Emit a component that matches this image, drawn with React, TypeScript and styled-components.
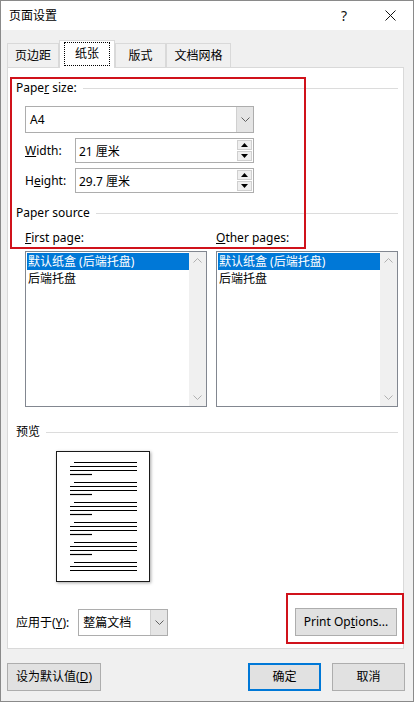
import React from "react";
import styled, { createGlobalStyle, css } from "styled-components";

const GlobalStyle = createGlobalStyle`
  html, body {
    margin: 0;
    padding: 0;
    background: #ffffff;
  }
  body {
    font-family: "Noto Sans", "Noto Sans CJK SC", sans-serif;
    font-size: 12px;
    color: #000;
  }
  * { box-sizing: border-box; }
`;

const RED = "#d0121b";

const Window = styled.div`
  width: 414px;
  height: 702px;
  border: 1px solid #8a8a8a;
  background: #f0f0f0;
  display: flex;
  flex-direction: column;
`;

const TitleBar = styled.div`
  height: 29px;
  background: #ffffff;
  display: flex;
  align-items: center;
  padding-left: 8px;
`;

const Title = styled.div`
  flex: 1;
  font-size: 12px;
  line-height: 16px;
`;

const TitleButton = styled.div`
  width: 46px;
  height: 29px;
  display: flex;
  align-items: center;
  justify-content: center;
  font-size: 14px;
  color: #111;
`;

const Body = styled.div`
  padding: 10px 9px 0 6px;
  display: flex;
  flex-direction: column;
`;

const TabRow = styled.div`
  display: flex;
  align-items: flex-end;
  height: 27px;
  position: relative;
  z-index: 1;
`;

const Tab = styled.div<{ $w: number; $active?: boolean }>`
  width: ${(p) => p.$w}px;
  height: 24px;
  border: 1px solid #d9d9d9;
  border-bottom: none;
  background: #f0f0f0;
  display: flex;
  align-items: center;
  justify-content: center;
  line-height: 16px;
  ${(p) =>
    p.$active &&
    css`
      height: 28px;
      margin-bottom: -1px;
      background: #ffffff;
      padding-bottom: 2px;
    `}
`;

const FocusText = styled.span`
  border: 1px dotted #000;
  padding: 3px 10px;
  line-height: 16px;
`;

const Panel = styled.div`
  position: relative;
  background: #ffffff;
  border: 1px solid #d9d9d9;
  padding: 12px 5px 12px 8px;
  display: flex;
  flex-direction: column;
`;

const Marker = styled.div`
  position: absolute;
  border: 2px solid ${RED};
  pointer-events: none;
`;

const SectionHeader = styled.div<{ $mt?: number }>`
  display: flex;
  align-items: center;
  gap: 6px;
  line-height: 16px;
  margin-top: ${(p) => p.$mt ?? 0}px;
  &::after {
    content: "";
    flex: 1;
    height: 1px;
    background: #dcdcdc;
  }
`;

const Indent = styled.div<{ $mt?: number }>`
  padding-left: 9px;
  margin-top: ${(p) => p.$mt ?? 0}px;
`;

const Combo = styled.div<{ $w: number }>`
  width: ${(p) => p.$w}px;
  height: 27px;
  border: 1px solid #adadad;
  background: #fff;
  display: flex;
  align-items: stretch;
`;

const ComboText = styled.div`
  flex: 1;
  display: flex;
  align-items: center;
  padding-left: 4px;
`;

const ComboArrow = styled.div`
  width: 17px;
  background: #e5e5e5;
  border-left: 1px solid #d0d0d0;
  display: flex;
  align-items: center;
  justify-content: center;
`;

const FieldRow = styled.div`
  display: flex;
  align-items: center;
  margin-top: 5px;
`;

const FieldLabel = styled.div`
  width: 50px;
  line-height: 16px;
`;

const SpinBox = styled.div`
  width: 179px;
  height: 25px;
  border: 1px solid #adadad;
  display: flex;
  align-items: stretch;
`;

const SpinText = styled.div`
  flex: 1;
  display: flex;
  align-items: center;
  padding-left: 3px;
`;

const SpinButtons = styled.div`
  width: 16px;
  padding: 1px 1px 1px 0;
  display: flex;
  flex-direction: column;
  gap: 1px;
`;

const SpinButton = styled.div`
  flex: 1;
  border: 1px solid #cfcfcf;
  background: #efefef;
  display: flex;
  align-items: center;
  justify-content: center;
`;

const Columns = styled.div`
  display: grid;
  grid-template-columns: 182px 182px;
  column-gap: 9px;
`;

const ColLabel = styled.div`
  line-height: 16px;
`;

const ListBox = styled.div`
  height: 156px;
  border: 1px solid #828790;
  display: flex;
`;

const ListItems = styled.div`
  flex: 1;
  padding: 1px 0 1px 1px;
`;

const ListItem = styled.div<{ $selected?: boolean }>`
  height: 17px;
  line-height: 17px;
  padding-left: 1px;
  white-space: nowrap;
  ${(p) =>
    p.$selected &&
    css`
      background: #0078d7;
      color: #fff;
    `}
`;

const ScrollBar = styled.div`
  width: 17px;
  background: #f0f0f0;
  display: flex;
  flex-direction: column;
  justify-content: space-between;
  align-items: center;
  padding: 6px 0;
`;

const PreviewPage = styled.div`
  width: 94px;
  height: 131px;
  margin-left: 40px;
  margin-top: 11px;
  border: 1px solid #1a1a1a;
  background: #fff;
  box-shadow: 1px 1px 3px rgba(0, 0, 0, 0.35);
`;

const BottomRow = styled.div`
  margin-top: 26px;
  height: 28px;
  display: flex;
  align-items: center;
  justify-content: space-between;
  padding-right: 1px;
`;

const ApplyGroup = styled.div`
  display: flex;
  align-items: center;
  gap: 9px;
`;

const Button = styled.div<{ $w: number; $primary?: boolean }>`
  width: ${(p) => p.$w}px;
  height: 28px;
  background: #e1e1e1;
  border: 1px solid #adadad;
  display: flex;
  align-items: center;
  justify-content: center;
  line-height: 16px;
  ${(p) =>
    p.$primary &&
    css`
      border: 2px solid #0078d7;
    `}
`;

const Footer = styled.div`
  margin-top: 14px;
  margin-right: -1px;
  display: flex;
  align-items: center;
  gap: 11px;
  & > :first-child {
    margin-right: auto;
  }
`;

const Chevron = ({ dir = "down", color = "#606060" }: { dir?: "down" | "up"; color?: string }) => (
  <svg width="9" height="5" viewBox="0 0 9 5">
    <polyline
      points={dir === "down" ? "0.5,0.5 4.5,4.5 8.5,0.5" : "0.5,4.5 4.5,0.5 8.5,4.5"}
      fill="none"
      stroke={color}
      strokeWidth="1"
    />
  </svg>
);

const Tri = ({ up }: { up?: boolean }) => (
  <svg width="7" height="4" viewBox="0 0 7 4">
    <polygon points={up ? "0,4 7,4 3.5,0" : "0,0 7,0 3.5,4"} fill="#000" />
  </svg>
);

const CloseIcon = () => (
  <svg width="11" height="11" viewBox="0 0 11 11">
    <path d="M0.5 0.5 L10.5 10.5 M10.5 0.5 L0.5 10.5" stroke="#111" strokeWidth="1" />
  </svg>
);

const PageLines = () => {
  const groups = [0, 1, 2, 3, 4, 5];
  return (
    <svg width="92" height="129" viewBox="0 0 92 129">
      {groups.map((g) => {
        const y = 10.5 + g * 20;
        const last = g === 5;
        return (
          <g key={g} stroke="#000" strokeWidth="1.2">
            <line x1="17" y1={y} x2="80" y2={y} />
            <line x1="13" y1={y + 4} x2="80" y2={y + 4} />
            <line x1="13" y1={y + 8} x2="80" y2={y + 8} />
            {!last && <line x1="13" y1={y + 12} x2="35" y2={y + 12} />}
          </g>
        );
      })}
    </svg>
  );
};

const sources = ["默认纸盒 (后端托盘)", "后端托盘"];

function SourceList() {
  return (
    <ListBox>
      <ListItems>
        {sources.map((s, i) => (
          <ListItem key={s} $selected={i === 0}>
            {s}
          </ListItem>
        ))}
      </ListItems>
      <ScrollBar>
        <Chevron dir="up" color="#b0b0b0" />
        <Chevron dir="down" color="#b0b0b0" />
      </ScrollBar>
    </ListBox>
  );
}

export default function App() {
  return (
    <>
      <GlobalStyle />
      <Window>
        <TitleBar>
          <Title>页面设置</Title>
          <TitleButton>?</TitleButton>
          <TitleButton>
            <CloseIcon />
          </TitleButton>
        </TitleBar>
        <Body>
          <TabRow>
            <Tab $w={52}>页边距</Tab>
            <Tab $w={56} $active>
              <FocusText>纸张</FocusText>
            </Tab>
            <Tab $w={51}>版式</Tab>
            <Tab $w={65}>文档网格</Tab>
          </TabRow>
          <Panel>
            <SectionHeader>
              <span>
                Pape<u>r</u> size:
              </span>
            </SectionHeader>
            <Indent $mt={10}>
              <Combo $w={229}>
                <ComboText>A4</ComboText>
                <ComboArrow>
                  <Chevron />
                </ComboArrow>
              </Combo>
              <FieldRow>
                <FieldLabel>
                  <u>W</u>idth:
                </FieldLabel>
                <SpinBox>
                  <SpinText>21 厘米</SpinText>
                  <SpinButtons>
                    <SpinButton>
                      <Tri up />
                    </SpinButton>
                    <SpinButton>
                      <Tri />
                    </SpinButton>
                  </SpinButtons>
                </SpinBox>
              </FieldRow>
              <FieldRow>
                <FieldLabel>
                  H<u>e</u>ight:
                </FieldLabel>
                <SpinBox>
                  <SpinText>29.7 厘米</SpinText>
                  <SpinButtons>
                    <SpinButton>
                      <Tri up />
                    </SpinButton>
                    <SpinButton>
                      <Tri />
                    </SpinButton>
                  </SpinButtons>
                </SpinBox>
              </FieldRow>
            </Indent>

            <SectionHeader $mt={12}>
              <span>Paper source</span>
            </SectionHeader>
            <Indent $mt={9}>
              <Columns>
                <ColLabel>
                  <u>F</u>irst page:
                </ColLabel>
                <ColLabel>
                  <u>O</u>ther pages:
                </ColLabel>
              </Columns>
              <Columns style={{ marginTop: 5 }}>
                <SourceList />
                <SourceList />
              </Columns>
            </Indent>

            <SectionHeader $mt={17}>
              <span>预览</span>
            </SectionHeader>
            <PreviewPage>
              <PageLines />
            </PreviewPage>

            <BottomRow>
              <ApplyGroup>
                <span>
                  应用于(<u>Y</u>):
                </span>
                <Combo $w={90}>
                  <ComboText>整篇文档</ComboText>
                  <ComboArrow>
                    <Chevron />
                  </ComboArrow>
                </Combo>
              </ApplyGroup>
              <Button $w={102}>
                Print Op<u>t</u>ions...
              </Button>
            </BottomRow>

            <Marker style={{ left: 2, top: 9, width: 296, height: 172 }} />
            <Marker style={{ left: 278, top: 525, width: 118, height: 51 }} />
          </Panel>
          <Footer>
            <Button $w={94}>
              设为默认值(<u>D</u>)
            </Button>
            <Button $w={73} $primary>
              确定
            </Button>
            <Button $w={73}>取消</Button>
          </Footer>
        </Body>
      </Window>
    </>
  );
}
